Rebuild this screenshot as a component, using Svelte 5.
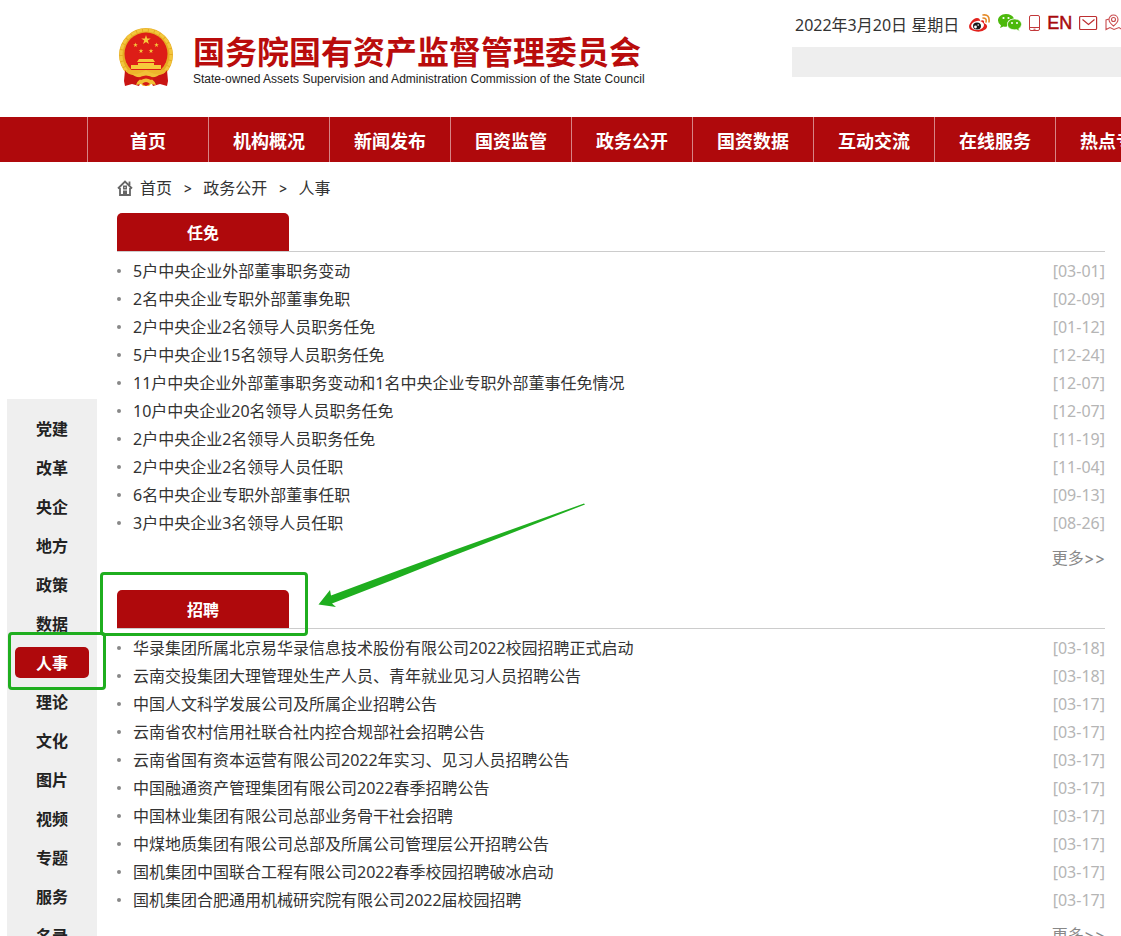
<script>
  const nav = ['首页', '机构概况', '新闻发布', '国资监管', '政务公开', '国资数据', '互动交流', '在线服务', '热点专题'];
  const side = ['党建', '改革', '央企', '地方', '政策', '数据', '人事', '理论', '文化', '图片', '视频', '专题', '服务', '名录'];
  const sections = [
    {
      title: '任免',
      rows: [
        ['5户中央企业外部董事职务变动', '03-01'],
        ['2名中央企业专职外部董事免职', '02-09'],
        ['2户中央企业2名领导人员职务任免', '01-12'],
        ['5户中央企业15名领导人员职务任免', '12-24'],
        ['11户中央企业外部董事职务变动和1名中央企业专职外部董事任免情况', '12-07'],
        ['10户中央企业20名领导人员职务任免', '12-07'],
        ['2户中央企业2名领导人员职务任免', '11-19'],
        ['2户中央企业2名领导人员任职', '11-04'],
        ['6名中央企业专职外部董事任职', '09-13'],
        ['3户中央企业3名领导人员任职', '08-26']
      ]
    },
    {
      title: '招聘',
      marked: true,
      rows: [
        ['华录集团所属北京易华录信息技术股份有限公司2022校园招聘正式启动', '03-18'],
        ['云南交投集团大理管理处生产人员、青年就业见习人员招聘公告', '03-18'],
        ['中国人文科学发展公司及所属企业招聘公告', '03-17'],
        ['云南省农村信用社联合社内控合规部社会招聘公告', '03-17'],
        ['云南省国有资本运营有限公司2022年实习、见习人员招聘公告', '03-17'],
        ['中国融通资产管理集团有限公司2022春季招聘公告', '03-17'],
        ['中国林业集团有限公司总部业务骨干社会招聘', '03-17'],
        ['中煤地质集团有限公司总部及所属公司管理层公开招聘公告', '03-17'],
        ['国机集团中国联合工程有限公司2022春季校园招聘破冰启动', '03-17'],
        ['国机集团合肥通用机械研究院有限公司2022届校园招聘', '03-17']
      ]
    }
  ];
  const star = 'M0-1 .23-.31.95-.31.36.12.59.81 0 .38-.59.81-.36.12-.95-.31-.23-.31z';
</script>

<div class="page">
  <header>
    <div class="brand">
      <svg class="emblem" width="56" height="60" viewBox="0 0 56 60" aria-hidden="true">
        <circle cx="28" cy="27" r="27" fill="#e6ab22" />
        <circle cx="28" cy="27" r="25" fill="none" stroke="#f3c63d" stroke-width="3" stroke-dasharray="5 1" />
        <circle cx="28" cy="26" r="21.500" fill="#dd1d17" />
        <g fill="#f6c93b">
          <path d={star} transform="translate(28 12) scale(5)" />
          <path d={star} transform="translate(17.500 17) scale(2.5)" />
          <path d={star} transform="translate(38.500 17) scale(2.5)" />
          <path d={star} transform="translate(23 23) scale(2.5)" />
          <path d={star} transform="translate(33 23) scale(2.5)" />
          <path d="M21 31h14l2 3H19zM20 35h16v2h7v4H13v-4h7z" />
        </g>
        <path d="M8 42h40l-6 7H14z" fill="#edb52b" />
        <path d="M7 42q3 6 12 5l5 4-3 7-7-2-7 2-1-5z" fill="#c91413" />
        <path d="M49 42q-3 6-12 5l-5 4 3 7 7-2 7 2 1-5z" fill="#c91413" />
        <path d="M14 46q7 1 14-4 7 5 14 4-4 5-14 2-10 3-14-2zM18 57q2-7 10-7t10 7l-5-1-2 2h-6l-2-2z" fill="#f1c036" />
        <path d="M20 50q8-5 16 0l-3 2q-5-3-10 0zM24 56q4-4 8 0l-4 2z" fill="#d51a15" />
      </svg>
      <div class="names">
        <h1>国务院国有资产监督管理委员会</h1>
        <p>State-owned Assets Supervision and Administration Commission of the State Council</p>
      </div>
    </div>
    <div class="tools">
      <div class="tool-row">
        <span class="date">2022年3月20日 星期日</span>
        <a href="#weibo" aria-label="微博">
          <svg width="22" height="18" viewBox="0 0 22 18">
            <path d="M8 4q-3 0-6 4-5 7 3 9 7 2 12-2 3-4-2-6 1-4-4-2 0-3-3-3z" fill="#e2211c" />
            <ellipse cx="8.500" cy="11.500" rx="6.500" ry="4.500" fill="#fff" transform="rotate(-8 8 11)" />
            <ellipse cx="8" cy="12" rx="4" ry="3.500" fill="#191919" />
            <circle cx="6.500" cy="13" r="1.400" fill="#fff" />
            <circle cx="9.200" cy="11" r=".8" fill="#fff" />
            <path d="M14 1q7-1 6 7M14 4q4 0 3 4" fill="none" stroke="#e58a27" stroke-width="1.600" stroke-linecap="round" />
          </svg>
        </a>
        <a href="#wechat" aria-label="微信">
          <svg width="24" height="18" viewBox="0 0 24 18">
            <path d="M8 0C3 0 0 3 0 6.500q0 3 3 5L2 14l3.500-1.600q1.500.4 3.500.2Q8 5 16 4.500 14 0 8 0z" fill="#4cb90b" />
            <path d="M16.500 5C12 5 9.500 8 9.500 10.500c0 3.500 4 6 9 5l3 1.700-.8-2.500Q23.500 13 23.500 10.500C23.500 7.500 20.500 5 16.500 5z" fill="#4cb90b" stroke="#fff" stroke-width=".6" />
            <g fill="#fff"><circle cx="5.500" cy="4" r="1.100" /><circle cx="10.500" cy="4" r="1.100" /><circle cx="14" cy="9" r="1" /><circle cx="19" cy="9" r="1" /></g>
          </svg>
        </a>
        <a href="#mobile" aria-label="手机版">
          <svg width="11" height="18" viewBox="0 0 11 18" fill="none" stroke="#c2383a"><rect x=".5" y="1.500" width="10" height="15" rx="1.500" /><path d="M.5 13.500h10M4.500 15.200h2" /></svg>
        </a>
        <a class="en" href="#en">EN</a>
        <a href="#mail" aria-label="邮箱">
          <svg width="19" height="16" viewBox="0 0 19 16" fill="none" stroke="#bd2f31" stroke-width="1.200"><rect x=".6" y="1.500" width="17" height="13" rx="1" /><path d="m3.500 4.500 6 5 6-5" /></svg>
        </a>
        <a href="#map" aria-label="网站地图">
          <svg width="20" height="17" viewBox="0 0 20 17" fill="none" stroke="#c94c4e" stroke-width="1.100"><path d="M4 5 1 6v9.500l4-2 4 2 5-2 3 2V5M8.500 12Q4 8.500 4 5.500C4 3 6 1 8.500 1S13 3 13 5.500Q13 8.500 8.500 12z" /><circle cx="8.500" cy="5.500" r="2" /></svg>
        </a>
      </div>
      <form class="search">
        <input type="search" aria-label="搜索" />
        <button type="button" aria-label="搜索">
          <svg width="18" height="18" viewBox="0 0 18 18" fill="none" stroke="#888" stroke-width="2"><circle cx="7" cy="7" r="6" /><path d="m11 11 6 6" /></svg>
        </button>
      </form>
    </div>
  </header>

  <nav class="main-nav">
    {#each nav as item}<a href="#nav">{item}</a>{/each}
  </nav>

  <div class="body">
    <aside>
      <ul>
        {#each side as item}
          <li class:active={item === '人事'}><a href="#side">{item}</a></li>
        {/each}
      </ul>
    </aside>
    <main>
      <div class="crumbs">
        <svg width="16" height="16" viewBox="0 0 16 16" aria-hidden="true">
          <path d="M1 8.500 8 1.500l7 7M12.500 5V1.500M3 8v7h10V8" fill="none" stroke="#666" stroke-width="1.800" />
          <path d="M6 10.500h4V15H6zM6 5.500h4v4H6z" fill="#666" />
          <path d="M7.500 7h1v1h-1z" fill="#fff" />
        </svg>
        <a href="#home">首页</a><span>&gt;</span><a href="#open">政务公开</a><span>&gt;</span><a href="#hr">人事</a>
      </div>
      {#each sections as s}
        <section>
          <div class="head" class:marked={s.marked}><h2>{s.title}</h2></div>
          <ul>
            {#each s.rows as [text, date]}
              <li><a href="#article">{text}</a><time>[{date}]</time></li>
            {/each}
          </ul>
          <a class="more" href="#more">更多<span>&gt;&gt;</span></a>
          {#if s.marked}
            <svg class="arrow" width="270" height="110" viewBox="0 0 270 110" aria-hidden="true">
              <path d="M2.500 104.500 14 90 15 95.500 74 73.500 134 51.500 268 3.500 269 4.500 134 57 74 81 16 103.500 20 107z" fill="#1fae1f" />
            </svg>
          {/if}
        </section>
      {/each}
    </main>
  </div>
</div>

<style>
  :global(body) { margin: 0; background: #fff; }
  .page {
    height: 100vh;
    overflow: hidden;
    font: 16px/28px "Noto Sans", "Noto Sans CJK SC", sans-serif;
    color: #333;
  }
  a { color: inherit; text-decoration: none; }
  ul { list-style: none; margin: 0; padding: 0; }
  h1, h2, p { margin: 0; }

  header { display: flex; height: 117px; padding-left: 118px; }
  .brand { display: flex; gap: 19px; flex: 0 0 674px; padding-top: 28px; box-sizing: border-box; }
  .names { white-space: nowrap; }
  h1 { font: bold 32px/44px "Noto Sans CJK SC", sans-serif; color: #b90c0c; }
  .names p { font: 12px/14px "Liberation Sans", sans-serif; color: #222; }
  .tools { flex: 1 0 360px; }
  .tool-row { display: flex; align-items: center; gap: 7px; height: 47px; padding-left: 3px; box-sizing: border-box; white-space: nowrap; }
  .tool-row a { display: flex; padding-bottom: 2px; }
  .date { padding: 3px 3px 0 0; }
  .tool-row .en { font: 18px/20px "Liberation Sans", sans-serif; color: #a80b0e; -webkit-text-stroke: 0.5px #a80b0e; }
  .search { display: flex; height: 30px; background: #eee; }
  .search input { flex: 1 0 328px; min-width: 0; padding: 0 10px; border: 0; background: none; box-sizing: border-box; }
  .search button { display: flex; align-items: center; padding: 0; border: 0; background: none; }

  .main-nav { display: flex; height: 45px; padding-left: 87px; background: #af090c; overflow: hidden; }
  .main-nav a {
    flex: 0 0 120px;
    border-left: 1px solid #d78485;
    text-align: center;
    color: #fff;
    font: bold 18px/46px "Noto Sans CJK SC", sans-serif;
  }

  .body { display: grid; grid-template-columns: 117px 1fr; }
  aside { width: 90px; margin: 237px 0 0 7px; padding: 10px 8px 0; background: #efefef; box-sizing: border-box; }
  aside li { height: 39px; text-align: center; font: bold 16px/39px "Noto Sans CJK SC", sans-serif; color: #222; }
  aside a { display: block; }
  aside .active { display: flow-root; position: relative; color: #fff; }
  aside .active a { height: 31px; margin: 4px 0; line-height: 31px; border-radius: 5px; background: #af090c; }
  aside .active::after {
    content: "";
    position: absolute;
    inset: -11px -17px -8px -7px;
    border: 3px solid #1fae1f;
    border-radius: 4px;
  }

  main { padding-right: 16px; }
  .crumbs { display: flex; align-items: center; height: 51px; }
  .crumbs svg { margin-right: 7px; }
  .crumbs span { margin: 0 11px; font: 14px/28px Inter, sans-serif; }
  section { position: relative; height: 377px; }
  .head { position: relative; border-bottom: 1px solid #ccc; margin-bottom: 5px; }
  h2 {
    width: 172px;
    border-radius: 5px 5px 0 0;
    background: #af090c;
    color: #fff;
    text-align: center;
    font: bold 16px/38px "Noto Sans CJK SC", sans-serif;
  }
  .marked::after {
    content: "";
    position: absolute;
    left: -17px;
    top: -18px;
    width: 202px;
    height: 58px;
    border: 3px solid #1fae1f;
    border-radius: 4px;
  }
  section li { display: flex; align-items: center; height: 28px; white-space: nowrap; }
  section li::before { content: ""; width: 4px; height: 4px; margin-right: 12px; border-radius: 50%; background: #888; }
  time { margin-left: auto; color: #b5b5b5; }
  .more { display: block; margin-top: 7px; text-align: right; color: #888; }
  .more span { font-family: Inter, sans-serif; }
  .arrow { position: absolute; left: 199px; top: -90px; }
</style>
